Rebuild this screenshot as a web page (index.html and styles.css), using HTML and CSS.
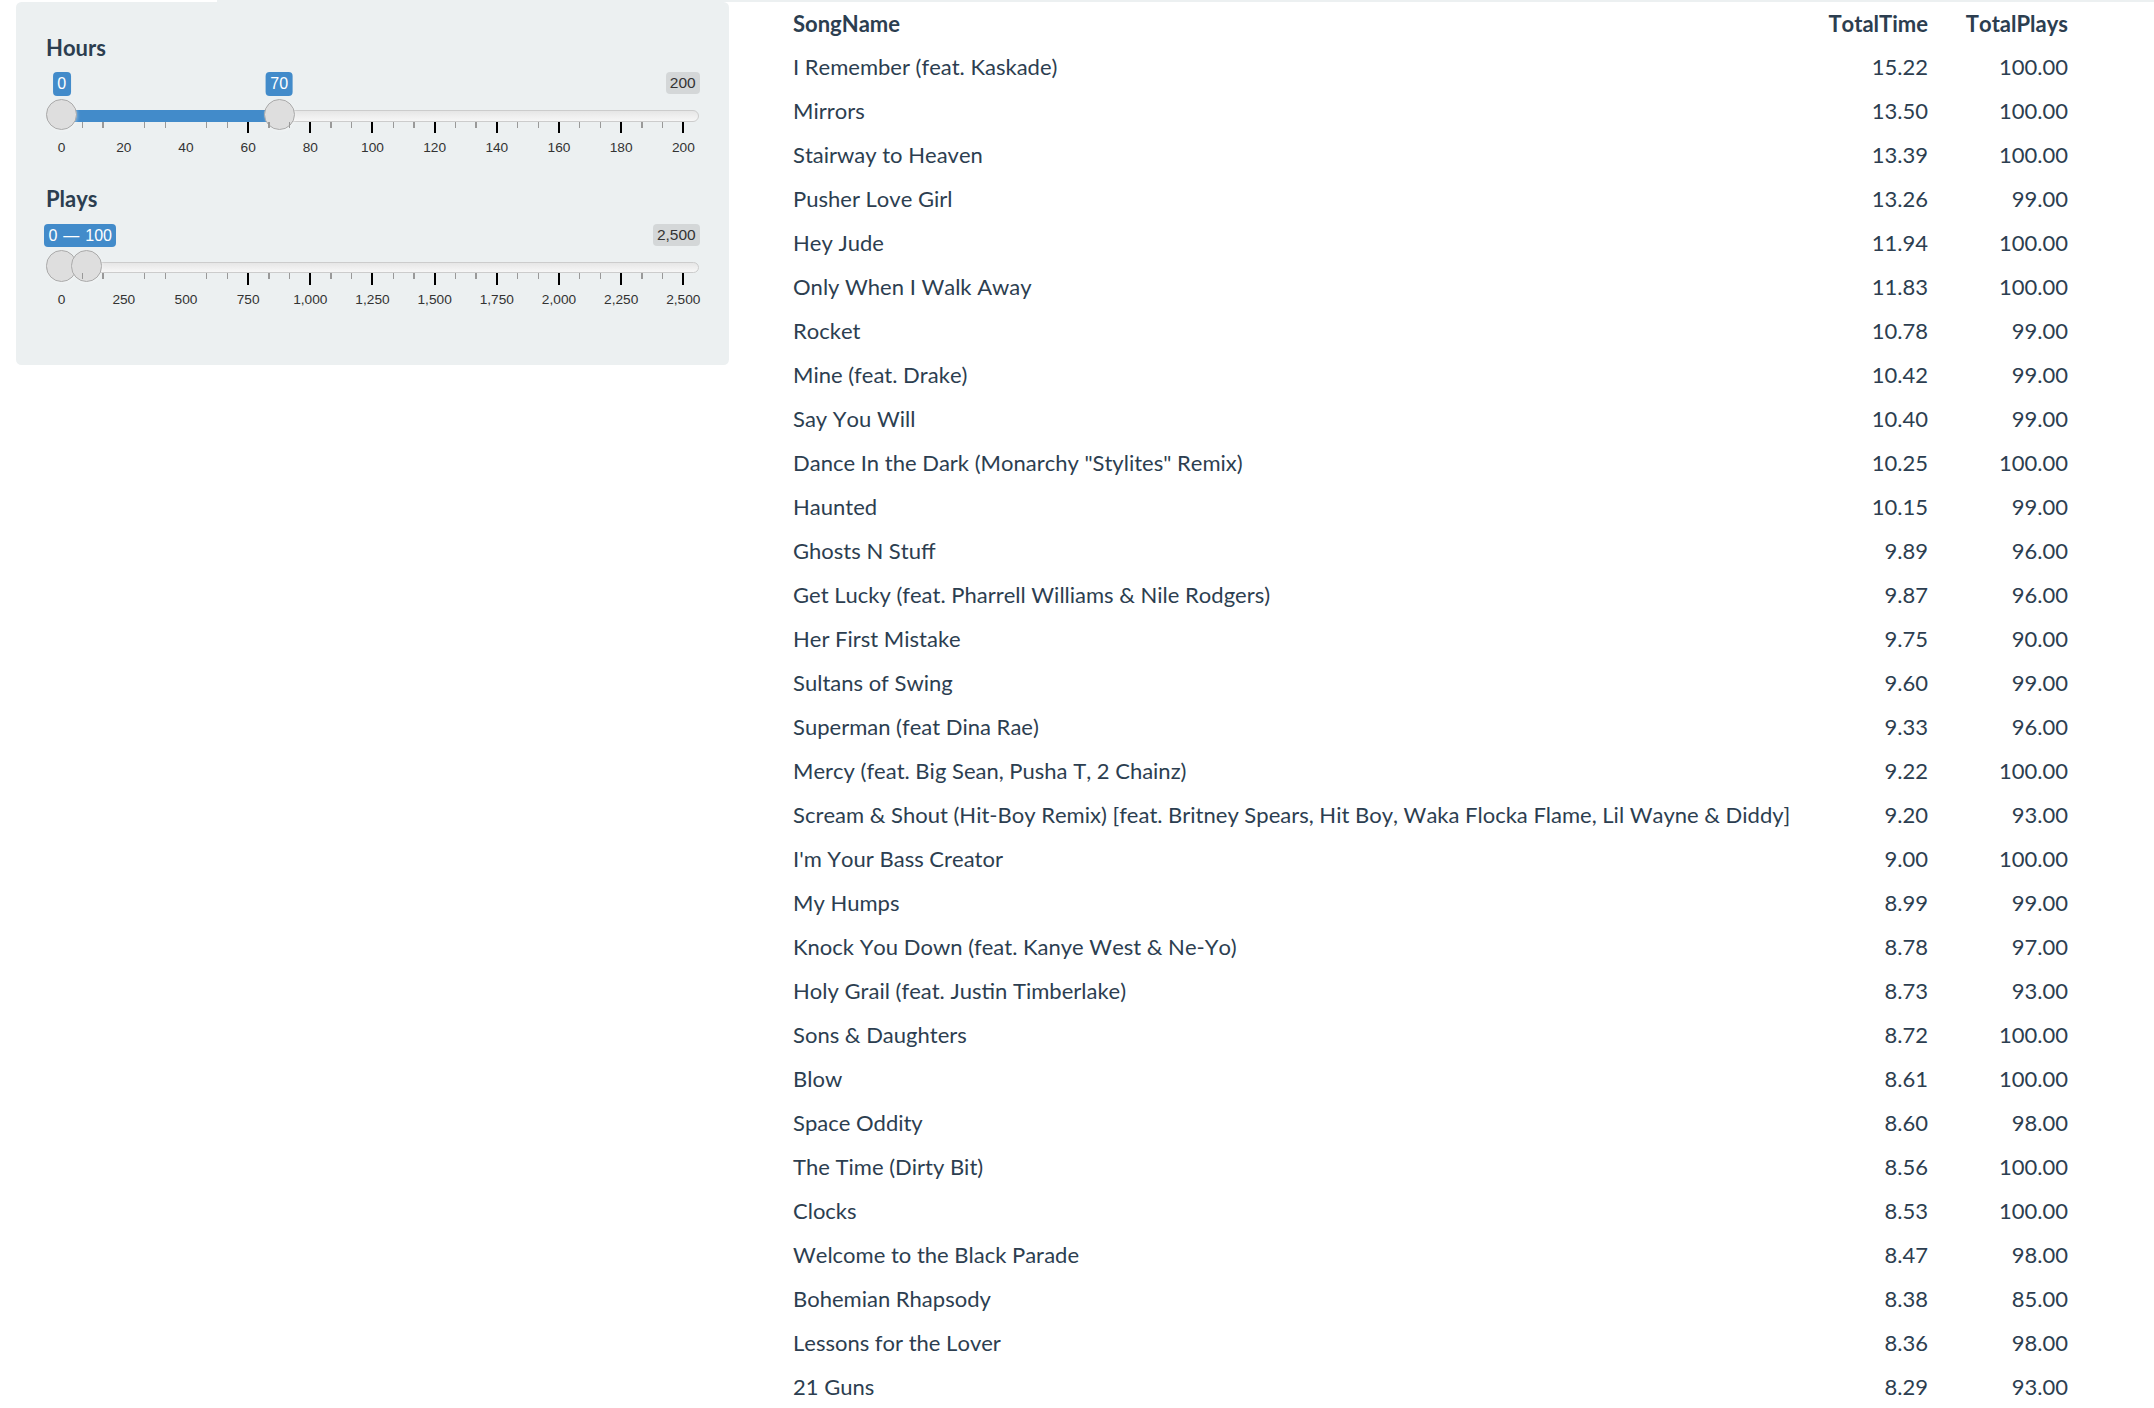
FILE: index.html
```html
<!DOCTYPE html>
<html>
<head>
<meta charset="utf-8">
<link rel="stylesheet" href="styles.css">
</head>
<body>
<div class="topline"></div>
<div class="layout">
  <div class="well">
    <div class="group">
      <label class="control-label">Hours</label>
      <div class="irs">
        <span class="irs-line"></span>
        <span class="irs-bar" style="left:15.65px;width:217.6px"></span>
        <span class="irs-handle" style="left:0px"></span>
        <span class="irs-handle" style="left:217.6px"></span>
        <span class="irs-label center" style="left:15.65px">0</span>
        <span class="irs-label center" style="left:233.25px">70</span>
        <span class="irs-max">200</span>
        <div class="irs-grid">
          <span class="pol" style="left:30%"></span>
          <span class="pol" style="left:40%"></span>
          <span class="pol" style="left:50%"></span>
          <span class="pol" style="left:60%"></span>
          <span class="pol" style="left:70%"></span>
          <span class="pol" style="left:80%"></span>
          <span class="pol" style="left:90%"></span>
          <span class="pol" style="left:100%"></span>
          <span class="pol small" style="left:3.333%"></span>
          <span class="pol small" style="left:6.667%"></span>
          <span class="pol small" style="left:13.333%"></span>
          <span class="pol small" style="left:16.667%"></span>
          <span class="pol small" style="left:23.333%"></span>
          <span class="pol small" style="left:26.667%"></span>
          <span class="pol small" style="left:33.333%"></span>
          <span class="pol small" style="left:36.667%"></span>
          <span class="pol small" style="left:43.333%"></span>
          <span class="pol small" style="left:46.667%"></span>
          <span class="pol small" style="left:53.333%"></span>
          <span class="pol small" style="left:56.667%"></span>
          <span class="pol small" style="left:63.333%"></span>
          <span class="pol small" style="left:66.667%"></span>
          <span class="pol small" style="left:73.333%"></span>
          <span class="pol small" style="left:76.667%"></span>
          <span class="pol small" style="left:83.333%"></span>
          <span class="pol small" style="left:86.667%"></span>
          <span class="pol small" style="left:93.333%"></span>
          <span class="pol small" style="left:96.667%"></span>
          <span class="gtxt" style="left:0%">0</span>
          <span class="gtxt" style="left:10%">20</span>
          <span class="gtxt" style="left:20%">40</span>
          <span class="gtxt" style="left:30%">60</span>
          <span class="gtxt" style="left:40%">80</span>
          <span class="gtxt" style="left:50%">100</span>
          <span class="gtxt" style="left:60%">120</span>
          <span class="gtxt" style="left:70%">140</span>
          <span class="gtxt" style="left:80%">160</span>
          <span class="gtxt" style="left:90%">180</span>
          <span class="gtxt" style="left:100%">200</span>
        </div>
      </div>
    </div>
    <div class="group">
      <label class="control-label">Plays</label>
      <div class="irs">
        <span class="irs-line"></span>
        <span class="irs-bar" style="left:15.65px;width:24.87px"></span>
        <span class="irs-handle" style="left:0px"></span>
        <span class="irs-handle" style="left:24.87px"></span>
        <span class="irs-label single" style="left:-2px">0 — 100</span>
        <span class="irs-max">2,500</span>
        <div class="irs-grid">
          <span class="pol" style="left:30%"></span>
          <span class="pol" style="left:40%"></span>
          <span class="pol" style="left:50%"></span>
          <span class="pol" style="left:60%"></span>
          <span class="pol" style="left:70%"></span>
          <span class="pol" style="left:80%"></span>
          <span class="pol" style="left:90%"></span>
          <span class="pol" style="left:100%"></span>
          <span class="pol small" style="left:3.333%"></span>
          <span class="pol small" style="left:6.667%"></span>
          <span class="pol small" style="left:13.333%"></span>
          <span class="pol small" style="left:16.667%"></span>
          <span class="pol small" style="left:23.333%"></span>
          <span class="pol small" style="left:26.667%"></span>
          <span class="pol small" style="left:33.333%"></span>
          <span class="pol small" style="left:36.667%"></span>
          <span class="pol small" style="left:43.333%"></span>
          <span class="pol small" style="left:46.667%"></span>
          <span class="pol small" style="left:53.333%"></span>
          <span class="pol small" style="left:56.667%"></span>
          <span class="pol small" style="left:63.333%"></span>
          <span class="pol small" style="left:66.667%"></span>
          <span class="pol small" style="left:73.333%"></span>
          <span class="pol small" style="left:76.667%"></span>
          <span class="pol small" style="left:83.333%"></span>
          <span class="pol small" style="left:86.667%"></span>
          <span class="pol small" style="left:93.333%"></span>
          <span class="pol small" style="left:96.667%"></span>
          <span class="gtxt" style="left:0%">0</span>
          <span class="gtxt" style="left:10%">250</span>
          <span class="gtxt" style="left:20%">500</span>
          <span class="gtxt" style="left:30%">750</span>
          <span class="gtxt" style="left:40%">1,000</span>
          <span class="gtxt" style="left:50%">1,250</span>
          <span class="gtxt" style="left:60%">1,500</span>
          <span class="gtxt" style="left:70%">1,750</span>
          <span class="gtxt" style="left:80%">2,000</span>
          <span class="gtxt" style="left:90%">2,250</span>
          <span class="gtxt" style="left:100%">2,500</span>
        </div>
      </div>
    </div>
  </div>
  <div class="main">
    <table class="songs">
      <colgroup>
        <col class="c-name">
        <col class="c-time">
        <col class="c-plays">
      </colgroup>
      <thead>
        <tr><th>SongName</th><th class="num">TotalTime</th><th class="num">TotalPlays</th></tr>
      </thead>
      <tbody>
        <tr><td>I Remember (feat. Kaskade)</td><td class="num">15.22</td><td class="num">100.00</td></tr>
        <tr><td>Mirrors</td><td class="num">13.50</td><td class="num">100.00</td></tr>
        <tr><td>Stairway to Heaven</td><td class="num">13.39</td><td class="num">100.00</td></tr>
        <tr><td>Pusher Love Girl</td><td class="num">13.26</td><td class="num">99.00</td></tr>
        <tr><td>Hey Jude</td><td class="num">11.94</td><td class="num">100.00</td></tr>
        <tr><td>Only When I Walk Away</td><td class="num">11.83</td><td class="num">100.00</td></tr>
        <tr><td>Rocket</td><td class="num">10.78</td><td class="num">99.00</td></tr>
        <tr><td>Mine (feat. Drake)</td><td class="num">10.42</td><td class="num">99.00</td></tr>
        <tr><td>Say You Will</td><td class="num">10.40</td><td class="num">99.00</td></tr>
        <tr><td>Dance In the Dark (Monarchy "Stylites" Remix)</td><td class="num">10.25</td><td class="num">100.00</td></tr>
        <tr><td>Haunted</td><td class="num">10.15</td><td class="num">99.00</td></tr>
        <tr><td>Ghosts N Stuff</td><td class="num">9.89</td><td class="num">96.00</td></tr>
        <tr><td>Get Lucky (feat. Pharrell Williams &amp; Nile Rodgers)</td><td class="num">9.87</td><td class="num">96.00</td></tr>
        <tr><td>Her First Mistake</td><td class="num">9.75</td><td class="num">90.00</td></tr>
        <tr><td>Sultans of Swing</td><td class="num">9.60</td><td class="num">99.00</td></tr>
        <tr><td>Superman (feat Dina Rae)</td><td class="num">9.33</td><td class="num">96.00</td></tr>
        <tr><td>Mercy (feat. Big Sean, Pusha T, 2 Chainz)</td><td class="num">9.22</td><td class="num">100.00</td></tr>
        <tr><td>Scream &amp; Shout (Hit-Boy Remix) [feat. Britney Spears, Hit Boy, Waka Flocka Flame, Lil Wayne &amp; Diddy]</td><td class="num">9.20</td><td class="num">93.00</td></tr>
        <tr><td>I'm Your Bass Creator</td><td class="num">9.00</td><td class="num">100.00</td></tr>
        <tr><td>My Humps</td><td class="num">8.99</td><td class="num">99.00</td></tr>
        <tr><td>Knock You Down (feat. Kanye West &amp; Ne-Yo)</td><td class="num">8.78</td><td class="num">97.00</td></tr>
        <tr><td>Holy Grail (feat. Justin Timberlake)</td><td class="num">8.73</td><td class="num">93.00</td></tr>
        <tr><td>Sons &amp; Daughters</td><td class="num">8.72</td><td class="num">100.00</td></tr>
        <tr><td>Blow</td><td class="num">8.61</td><td class="num">100.00</td></tr>
        <tr><td>Space Oddity</td><td class="num">8.60</td><td class="num">98.00</td></tr>
        <tr><td>The Time (Dirty Bit)</td><td class="num">8.56</td><td class="num">100.00</td></tr>
        <tr><td>Clocks</td><td class="num">8.53</td><td class="num">100.00</td></tr>
        <tr><td>Welcome to the Black Parade</td><td class="num">8.47</td><td class="num">98.00</td></tr>
        <tr><td>Bohemian Rhapsody</td><td class="num">8.38</td><td class="num">85.00</td></tr>
        <tr><td>Lessons for the Lover</td><td class="num">8.36</td><td class="num">98.00</td></tr>
        <tr><td>21 Guns</td><td class="num">8.29</td><td class="num">93.00</td></tr>
      </tbody>
    </table>
  </div>
</div>
</body>
</html>
```

FILE: styles.css
```css
html, body {
  margin: 0;
  padding: 0;
  background: #ffffff;
}

body {
  font-family: Lato, "Noto Sans", sans-serif;
  color: #2c3e50;
  overflow: hidden;
  font-kerning: none;
}

.topline {
  height: 2px;
  margin-left: 217px;
  background: #ecf0f1;
}

.layout {
  display: flex;
  align-items: flex-start;
  padding-left: 16px;
  gap: 57px;
}

/* ---------- sidebar well ---------- */
.well {
  flex: 0 0 713px;
  width: 713px;
  box-sizing: border-box;
  background: #ecf0f1;
  border-radius: 5.5px;
  padding: 30.5px 30px 53px 30px;
}

.group + .group {
  margin-top: 23.9px;
}

.control-label {
  display: block;
  font-size: 22px;
  font-weight: 700;
  line-height: 29px;
  margin-bottom: 10.8px;
  color: #2c3e50;
}

/* ---------- range slider ---------- */
.irs {
  position: relative;
  height: 88px;
  font-family: "Liberation Sans", Arial, sans-serif;
}

.irs-line {
  position: absolute;
  left: 0;
  right: 0;
  top: 37.7px;
  height: 11.7px;
  box-sizing: border-box;
  border: 1.4px solid #cccccc;
  border-radius: 12px;
  background: linear-gradient(to bottom, #dedede -50%, #ffffff 150%);
}

.irs-bar {
  position: absolute;
  top: 37.7px;
  height: 11.7px;
  background: #428bca;
}

.irs-handle {
  position: absolute;
  top: 26.35px;
  width: 31.3px;
  height: 31.3px;
  box-sizing: border-box;
  border: 1.5px solid #aaaaaa;
  border-radius: 50%;
  background: #dedede;
  box-shadow: 1px 1px 3px rgba(255, 255, 255, 0.3);
}

.irs-label {
  position: absolute;
  top: 0;
  height: 23.4px;
  line-height: 23.4px;
  padding: 0 4.5px;
  border-radius: 4px;
  background: #428bca;
  color: #ffffff;
  font-size: 16px;
  white-space: nowrap;
}

.irs-label.center {
  transform: translateX(-50%);
}

.irs-label.single {
  word-spacing: 1.5px;
}

.irs-max {
  position: absolute;
  top: 0;
  right: -1px;
  height: 22px;
  line-height: 22px;
  padding: 0 4.3px;
  border-radius: 4px;
  background: rgba(0, 0, 0, 0.1);
  color: #333333;
  font-size: 15.5px;
  white-space: nowrap;
}

.irs-grid {
  position: absolute;
  left: 15.65px;
  width: 621.7px;
  top: 49.4px;
  height: 30px;
}

.pol {
  position: absolute;
  top: 0;
  width: 2px;
  height: 11.6px;
  margin-left: -1px;
  background: #000000;
}

.pol.small {
  width: 1.4px;
  height: 6px;
  margin-left: -0.7px;
  background: #999999;
}

.gtxt {
  position: absolute;
  top: 17.6px;
  transform: translateX(-50%);
  font-size: 13.7px;
  line-height: 17px;
  color: #333333;
  white-space: nowrap;
}

/* ---------- table ---------- */
.songs {
  border-collapse: collapse;
  table-layout: fixed;
  width: 1289px;
  font-size: 22px;
  color: #2c3e50;
}

.c-name { width: 1035px; }
.c-time { width: 114px; }
.c-plays { width: 140px; }

.songs th,
.songs td {
  padding: 0 7px;
  height: 44px;
  vertical-align: middle;
  white-space: nowrap;
  text-align: left;
}

.songs thead th {
  height: 42.5px;
  font-weight: 700;
}

.songs .num {
  text-align: right;
}
```
